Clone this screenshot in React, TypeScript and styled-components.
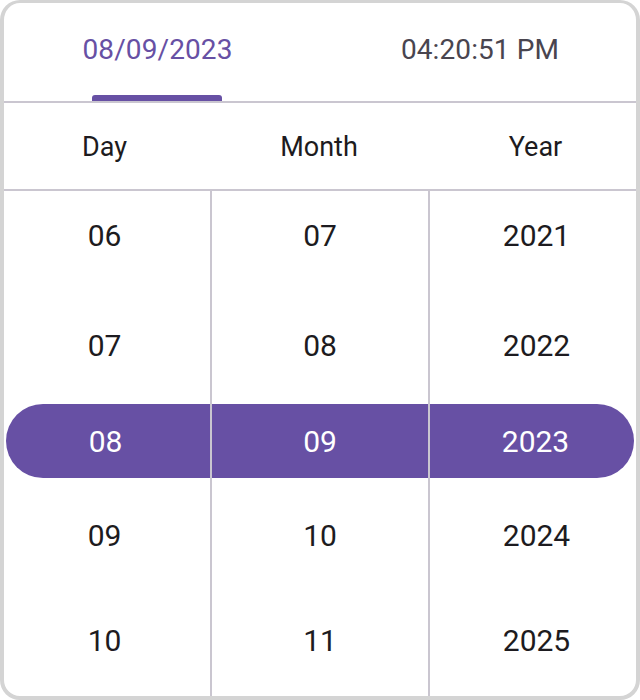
import styled, { createGlobalStyle } from "styled-components";

const GlobalStyle = createGlobalStyle`
  html, body {
    margin: 0;
    padding: 0;
    background: #ffffff;
  }
  * {
    box-sizing: border-box;
  }
`;

const colors = {
  primary: "#6750a4",
  text: "#1d1b20",
  muted: "#49454f",
  line: "#cac6d0",
  frame: "#d4d4d4",
};

// nudge > 0 pushes the text down, < 0 pulls it up (wheel rows are not evenly spaced)
const rows = [
  { day: "06", month: "07", year: "2021", height: 88, nudge: 0 },
  { day: "07", month: "08", year: "2022", height: 125, nudge: 7 },
  { day: "08", month: "09", year: "2023", height: 74, nudge: 0, selected: true },
  { day: "09", month: "10", year: "2024", height: 114, nudge: 0 },
  { day: "10", month: "11", year: "2025", height: 98, nudge: -8 },
];

export default function App() {
  return (
    <>
      <GlobalStyle />
      <Frame>
        <Tabs>
          <Tab>
            <TabLabel $active>08/09/2023</TabLabel>
            <TabIndicator $active />
          </Tab>
          <Tab>
            <TabLabel>04:20:51 PM</TabLabel>
            <TabIndicator />
          </Tab>
        </Tabs>

        <ColumnHeader>
          <HeaderCell>Day</HeaderCell>
          <HeaderCell>Month</HeaderCell>
          <HeaderCell>Year</HeaderCell>
        </ColumnHeader>

        <Wheel>
          {rows.map((row) => (
            <WheelRow key={row.year} $height={row.height} $selected={row.selected}>
              <WheelCell $selected={row.selected} $nudge={row.nudge}>{row.day}</WheelCell>
              <WheelCell $selected={row.selected} $nudge={row.nudge}>{row.month}</WheelCell>
              <WheelCell $selected={row.selected} $nudge={row.nudge}>{row.year}</WheelCell>
            </WheelRow>
          ))}
        </Wheel>
      </Frame>
    </>
  );
}

const Frame = styled.div`
  width: 640px;
  height: 700px;
  border: 4px solid ${colors.frame};
  border-top-width: 3px;
  border-radius: 20px;
  background: #ffffff;
  display: flex;
  flex-direction: column;
  overflow: hidden;
  font-family: Roboto, "Liberation Sans", sans-serif;
`;

const Tabs = styled.div`
  display: grid;
  grid-template-columns: 1fr 1fr;
  height: 100px;
  border-bottom: 2px solid ${colors.line};
  margin: 0 -4px;
`;

const Tab = styled.div`
  display: flex;
  flex-direction: column;
  align-items: center;
`;

const TabLabel = styled.div<{ $active?: boolean }>`
  flex: 1;
  display: flex;
  align-items: center;
  margin-right: ${(p) => (p.$active ? "5px" : "0")};
  font-size: 28px;
  color: ${(p) => (p.$active ? colors.primary : colors.muted)};
  letter-spacing: 0.1px;
`;

const TabIndicator = styled.div<{ $active?: boolean }>`
  width: 130px;
  height: 6px;
  margin-right: 6px;
  border-radius: 3px 3px 0 0;
  background: ${(p) => (p.$active ? colors.primary : "transparent")};
`;

const columns = "206px 218px 1fr";

// the day column sits a bit left of its centre, the year column a bit right
const cellOffsets = `
  &:nth-child(1) {
    padding-right: 5px;
  }
  &:nth-child(3) {
    padding-left: 7px;
  }
`;

const ColumnHeader = styled.div`
  display: grid;
  grid-template-columns: ${columns};
  height: 88px;
  border-bottom: 2px solid ${colors.line};
  margin: 0 -4px;
  padding: 0 4px;
`;

const HeaderCell = styled.div`
  display: flex;
  align-items: center;
  justify-content: center;
  padding-top: 2px;
  font-size: 27px;
  color: ${colors.text};
  ${cellOffsets}
`;

const Wheel = styled.div`
  flex: 1;
  display: flex;
  flex-direction: column;
`;

const WheelRow = styled.div<{ $height: number; $selected?: boolean }>`
  display: grid;
  grid-template-columns: ${(p) => (p.$selected ? "204px 218px 1fr" : columns)};
  height: ${(p) => p.$height}px;
  margin: ${(p) => (p.$selected ? "0 2px" : "0")};
  border-radius: ${(p) => (p.$selected ? "37px" : "0")};
  background: ${(p) => (p.$selected ? colors.primary : "transparent")};

  &:last-child {
    flex: 1;
  }
`;

const WheelCell = styled.div<{ $selected?: boolean; $nudge: number }>`
  display: flex;
  align-items: center;
  justify-content: center;
  padding-top: ${(p) => Math.max(p.$nudge, 0)}px;
  padding-bottom: ${(p) => Math.max(-p.$nudge, 0)}px;
  font-size: 30px;
  color: ${(p) => (p.$selected ? "#ffffff" : colors.text)};
  ${cellOffsets}

  & + & {
    border-left: 2px solid ${colors.line};
  }
`;
